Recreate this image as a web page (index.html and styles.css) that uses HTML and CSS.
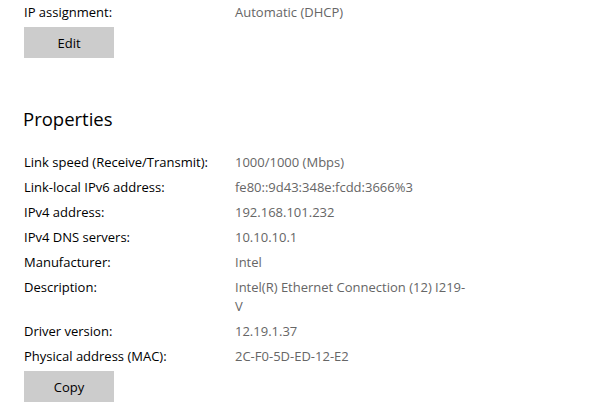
FILE: index.html
```html
<!DOCTYPE html>
<html>
<head>
<meta charset="utf-8">
<link rel="stylesheet" href="styles.css">
</head>
<body>
<div class="page">
  <div class="row top-row">
    <div class="label">IP assignment:</div>
    <div class="value">Automatic (DHCP)</div>
  </div>
  <button class="btn edit">Edit</button>

  <h2 class="heading">Properties</h2>

  <div class="props">
    <div class="row"><div class="label">Link speed (Receive/Transmit):</div><div class="value">1000/1000 (Mbps)</div></div>
    <div class="row"><div class="label">Link-local IPv6 address:</div><div class="value">fe80::9d43:348e:fcdd:3666%3</div></div>
    <div class="row"><div class="label">IPv4 address:</div><div class="value">192.168.101.232</div></div>
    <div class="row"><div class="label">IPv4 DNS servers:</div><div class="value">10.10.10.1</div></div>
    <div class="row"><div class="label">Manufacturer:</div><div class="value">Intel</div></div>
    <div class="row"><div class="label">Description:</div><div class="value">Intel(R) Ethernet Connection (12) I219-<br>V</div></div>
    <div class="row"><div class="label">Driver version:</div><div class="value">12.19.1.37</div></div>
    <div class="row"><div class="label">Physical address (MAC):</div><div class="value">2C-F0-5D-ED-12-E2</div></div>
  </div>
  <button class="btn copy">Copy</button>
</div>
</body>
</html>
```
FILE: styles.css
```css
html, body {
  margin: 0;
  padding: 0;
  background: #ffffff;
}
body {
  font-family: "Open Sans", "Noto Sans", "Liberation Sans", sans-serif;
  font-size: 13px;
  color: #000000;
}
.page {
  padding: 3px 0 0 24px;
}
.row {
  display: grid;
  grid-template-columns: 211px 250px;
  line-height: 19px;
}
.label {
  color: #000000;
}
.value {
  color: #666666;
}
.btn {
  display: block;
  width: 90px;
  height: 31px;
  border: none;
  background: #cccccc;
  color: #000000;
  font-family: inherit;
  font-size: 13px;
  padding: 0;
  margin: 5px 0 0 0;
}
.heading {
  margin: 47px 0 0 -1px;
  font-weight: normal;
  font-size: 18.5px;
  line-height: 28px;
}
.props {
  margin-top: 20px;
  display: flex;
  flex-direction: column;
  gap: 6px;
}
.btn.copy {
  margin-top: 5px;
}
```
